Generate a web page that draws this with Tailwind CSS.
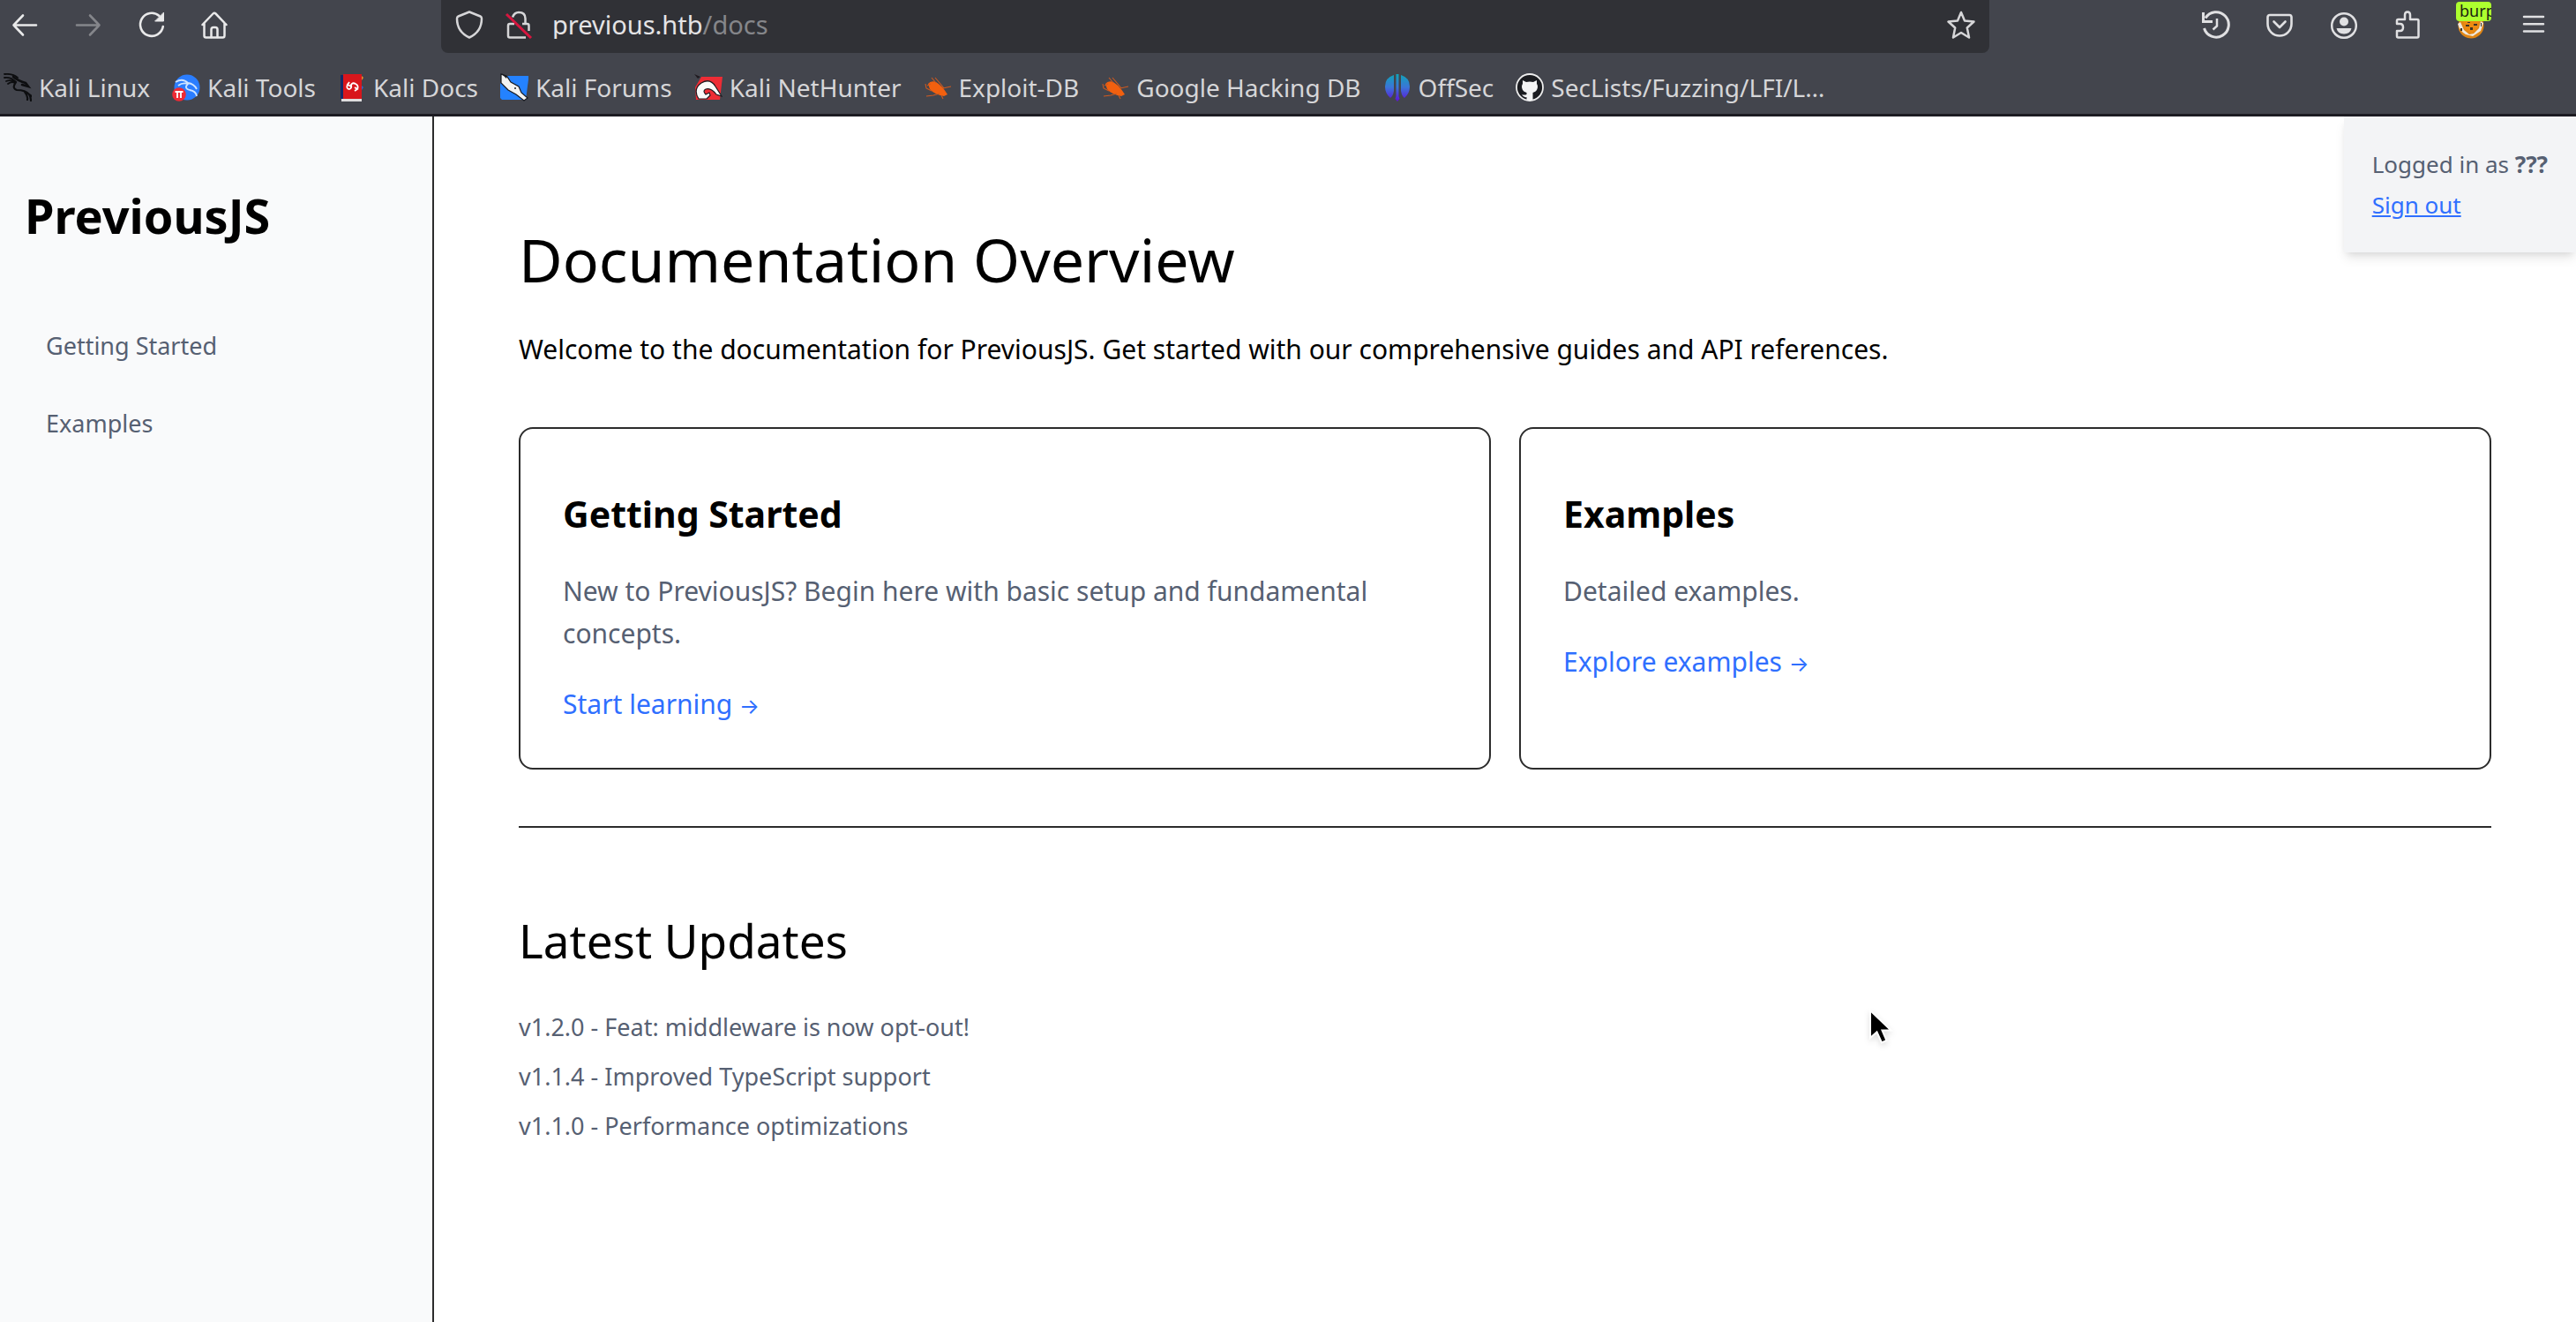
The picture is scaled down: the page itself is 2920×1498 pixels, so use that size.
<!DOCTYPE html>
<html lang="en">
<head>
    <meta charset="UTF-8">
    <meta name="viewport" content="width=device-width, initial-scale=1.0">
    <title>PreviousJS - Documentation</title>
    <!-- Tailwind CSS CDN -->
    <script src="https://cdn.jsdelivr.net/npm/@tailwindcss/browser@4"></script>
</head>
<body class="flex flex-col min-h-screen bg-white text-black font-['Noto_Sans',sans-serif]">
    <!-- Browser bar -->
    <header class="bg-[#43454d] border-b-3 border-[#1c1b22] text-[#d6d6d8]">
        <div class="flex h-[60px]">
            <div class="flex gap-10 w-[500px] shrink-0 pl-3 pt-3 text-[#e9e9ea]">
                <button type="button" aria-label="Back" class="size-8">
                    <svg viewBox="0 0 32 32" class="size-8" fill="none" stroke="currentColor" stroke-width="2.6" stroke-linecap="round" stroke-linejoin="round"><path d="M29 16.5H3.500M14 5.500L3.500 16.500L14 27.500"/></svg>
                </button>
                <button type="button" aria-label="Forward" class="size-8 text-[#85868b]">
                    <svg viewBox="0 0 32 32" class="size-8" fill="none" stroke="currentColor" stroke-width="2.6" stroke-linecap="round" stroke-linejoin="round"><path d="M3 16.500H28.500M18 5.500L28.500 16.500L18 27.500"/></svg>
                </button>
                <button type="button" aria-label="Reload" class="size-8">
                    <svg viewBox="0 0 32 32" class="size-8" fill="none" stroke="currentColor" stroke-width="2.6" stroke-linecap="round"><path d="M28.800 18A13 13 0 1 1 24.500 6"/><path d="M29.500 2.500V12H20Z" fill="currentColor" stroke-width="1"/></svg>
                </button>
                <button type="button" aria-label="Home" class="size-8">
                    <svg viewBox="0 0 32 32" class="size-8" fill="none" stroke="currentColor" stroke-width="2.500" stroke-linecap="round" stroke-linejoin="round"><path d="M1.500 16L13.500 3.500Q15 2 16.500 3.500L28.500 16M3.500 14V28.500Q3.500 30.500 5.500 30.500H24.500Q26.500 30.500 26.500 28.500V14"/><path d="M11.500 30V21.500Q11.500 19 14 19H16Q18.500 19 18.500 21.500V30"/></svg>
                </button>
            </div>
            <div class="flex flex-1 min-w-0 bg-[#303136] rounded-b-lg px-4 pt-3">
                <svg viewBox="0 0 32 32" class="size-8 shrink-0" fill="none" stroke="currentColor" stroke-width="2.500" stroke-linejoin="round"><path d="M16 1.500L28.500 6.500Q30 7.200 30 9Q30 24 16 30.500Q2 24 2 9Q2 7.200 3.500 6.500Z"/></svg>
                <svg viewBox="0 0 32 32" class="size-8 shrink-0 ml-6" fill="none" stroke="currentColor" stroke-width="2.500" stroke-linejoin="round"><path d="M9 7.500Q11 2 16 2Q23.500 2 23.500 9V14.500M27.500 23V17Q27.500 15 25.500 15H20M11 15H6Q4 15 4 17V28.500Q4 30.500 6 30.500H24"/><path d="M2 4L30 31" stroke="#d7163f" stroke-width="3"/></svg>
                <label class="flex h-8 items-center ml-[22px] text-[29px] leading-8">
                    <input type="text" aria-label="Address" value="previous.htb" class="field-sizing-content text-[#e4e4e6] outline-none">
                    <span class="text-[#85868a]">/docs</span>
                </label>
                <button type="button" aria-label="Bookmark this page" class="size-8 ml-auto">
                    <svg viewBox="0 0 32 32" class="size-8" fill="none" stroke="currentColor" stroke-width="2.500" stroke-linejoin="round"><path d="M16 2L20 11.500L30.500 12.500L22.800 19.500L25 30.500L16 25L7 30.500L9.200 19.500L1.500 12.500L12 11.500Z"/></svg>
                </button>
            </div>
            <div class="flex justify-end gap-10 w-[665px] shrink-0 pr-8 pt-3 text-[#e0e0e2]">
                <button type="button" aria-label="History" class="size-8">
                    <svg viewBox="0 0 32 32" class="size-8" fill="none" stroke="currentColor" stroke-width="3"><path d="M4 8.500A14.200 14.200 0 1 1 2.500 20M1.500 2V12.500H12"/><path d="M17 9V17.500L12.500 21.500" stroke-width="2.500"/></svg>
                </button>
                <button type="button" aria-label="Save to Pocket" class="size-8">
                    <svg viewBox="0 0 32 32" class="size-8" fill="none" stroke="currentColor" stroke-width="2.600" stroke-linecap="round" stroke-linejoin="round"><path d="M5 5H27Q29.500 5 29.500 7.500V15A13.500 13.500 0 0 1 2.500 15V7.500Q2.500 5 5 5Z"/><path d="M9.500 12.500L16 19L22.500 12.500"/></svg>
                </button>
                <button type="button" aria-label="Account" class="size-8">
                    <svg viewBox="0 0 32 32" class="size-8" fill="none" stroke="currentColor" stroke-width="2.500"><circle cx="17" cy="17" r="13.800"/><circle cx="17" cy="12.500" r="5" fill="currentColor" stroke="none"/><path d="M8.500 20H25.500Q24 26.500 17 26.500T8.500 20Z" fill="currentColor" stroke="none"/></svg>
                </button>
                <button type="button" aria-label="Extensions" class="size-8">
                    <svg viewBox="0 0 32 32" class="size-8" fill="none" stroke="currentColor" stroke-width="2.500" stroke-linejoin="round"><path d="M5 15V11.500Q5 10 6.500 10H14V5Q14 1.500 17 1.500T20 5V10H28Q29.500 10 29.500 11.500V29Q29.500 30.500 28 30.500H6.500Q5 30.500 5 29V23H8.500Q12 23 12 19T8.500 15H5Z"/></svg>
                </button>
                <button type="button" aria-label="FoxyProxy" class="relative size-8">
                    <svg viewBox="0 0 32 32" class="size-8"><circle cx="17" cy="17" r="14.500" fill="#e08514"/><path d="M2 15L5 13L9 22L15 27L20 26L26 20L28 12L31 14L28 23L19 29L11 27Q4 23 2 15Z" fill="#efe9df"/><path d="M8 12H26L25 19L18 26L10 21Z" fill="#ec8a12"/><path d="M11 16h4v2h-4zM20 15h4v2h-4zM16 19h3v3h-3zM5 20h2v3h-2zM28 14h1v4h-1zM13 13h3v1h-3z" fill="#3c3326"/></svg>
                    <span class="absolute left-0 -top-2.5 w-10 h-[22px] overflow-hidden rounded-sm bg-[#adff2f] pl-1 text-left text-[18px] leading-5 text-[#1c2410]">burp</span>
                </button>
                <button type="button" aria-label="Menu" class="size-8">
                    <svg viewBox="0 0 32 32" class="size-8" stroke="currentColor" stroke-width="2.500" stroke-linecap="round"><path d="M5 7H27M5 15.200H27M5 23.500H27"/></svg>
                </button>
            </div>
        </div>

        <!-- Bookmarks -->
        <nav aria-label="Bookmarks" class="flex items-center gap-[25px] h-[69px] pt-2 pl-1 text-[28px] leading-10 whitespace-nowrap">
            <a href="#" class="flex items-center gap-2">
                <svg viewBox="0 0 32 32" class="size-8" fill="none" stroke="#0d0e10" stroke-linecap="round"><path d="M1 1Q10 0 16 5M1 5Q8 4 13 9M3 9Q8 7 13 10M5 12Q9 9 13 11" stroke-width="1.800"/><path d="M11 4Q17 9 25 11L28 15L21 13" stroke-width="2.600"/><path d="M14 10Q9 17 15 19Q25 19 29 24Q31 27 31 31M24 21Q28 26 27 30M29 24L32 26" stroke-width="2.200"/></svg>
                Kali Linux
            </a>
            <a href="#" class="flex items-center gap-2">
                <svg viewBox="0 0 32 32" class="size-8"><circle cx="17" cy="16" r="14.500" fill="#2a7dff"/><path d="M4 10Q12 5 18 11Q25 12 28 18M7 14Q12 10 18 12Q13 17 20 19Q27 20 28 26" fill="none" stroke="#cfe4ff" stroke-width="1.800"/><circle cx="8" cy="24" r="7.800" fill="#ee2a35"/><path d="M3.500 21H12.500M6 21V28M10 21V28" stroke="#fff" stroke-width="1.800"/></svg>
                Kali Tools
            </a>
            <a href="#" class="flex items-center gap-2">
                <svg viewBox="0 0 32 32" class="size-8"><path d="M3 2H7V29H3Z" fill="#142a66"/><path d="M6 1H27V29H6Z" fill="#d8161c"/><path d="M4 29H27V32H4Z" fill="#dedede"/><path d="M27 3L29 5L27 8Z" fill="#e8902a"/><path d="M27 14L29 16L27 19Z" fill="#3566c8"/><path d="M11 12Q9 18 13 18Q16 17 15 13Q17 10 20 12Q24 14 22 18M13 10L11 13L15 15M19 20L22 18L19 16" fill="none" stroke="#fff" stroke-width="1.800"/></svg>
                Kali Docs
            </a>
            <a href="#" class="flex items-center gap-2">
                <svg viewBox="0 0 32 32" class="size-8"><path d="M6 3H32V7L29 30H2L0 28V12Z" fill="#2482ff"/><path d="M1 1L8 4L12 10L21 15L24 22L31 28L27 31L18 24L9 19L1 11Z" fill="#f4f4f2" stroke="#191b20" stroke-width="1.200"/><path d="M1 0L8 3L7 6Z" fill="#191b20"/><circle cx="17" cy="17" r="1" fill="#191b20"/></svg>
                Kali Forums
            </a>
            <a href="#" class="flex items-center gap-2">
                <svg viewBox="0 0 32 32" class="size-8"><path d="M8 4H32L29 30H2L1 16Z" fill="#ee2c35"/><path d="M5 29Q-2 18 8 11Q18 5 24 15L31 26L25 24Q19 16 13 18Q9 20 13 24L17 22L18 25L14 29Z" fill="#fafafa" stroke="#201a20" stroke-width="1.200"/><path d="M0 1L7 4L4 6Z" fill="#201a20"/></svg>
                Kali NetHunter
            </a>
            <a href="#" class="flex items-center gap-2">
                <svg viewBox="0 0 32 32" class="size-8"><path d="M5 12Q8 8 14 10Q21 14 27 24L23 26Q12 24 7 18Z" fill="#f2600f"/><path d="M2 12L3 17L9 20M9 5L14 11M13 5L19 12L23 17M22 17L31 15M3 26L11 25L18 23M20 25L22 29M4 14L8 12" fill="none" stroke="#cf5a20" stroke-width="1.100"/></svg>
                Exploit-DB
            </a>
            <a href="#" class="flex items-center gap-2">
                <svg viewBox="0 0 32 32" class="size-8"><path d="M5 12Q8 8 14 10Q21 14 27 24L23 26Q12 24 7 18Z" fill="#f2600f"/><path d="M2 12L3 17L9 20M9 5L14 11M13 5L19 12L23 17M22 17L31 15M3 26L11 25L18 23M20 25L22 29M4 14L8 12" fill="none" stroke="#cf5a20" stroke-width="1.100"/></svg>
                Google Hacking DB
            </a>
            <a href="#" class="flex items-center gap-2">
                <svg viewBox="0 0 32 32" class="size-8"><defs><linearGradient id="offsec" gradientUnits="userSpaceOnUse" x1="0" y1="1" x2="0" y2="31"><stop offset="0" stop-color="#10a5b8"/><stop offset="0.500" stop-color="#3b74d8"/><stop offset="1" stop-color="#5c16d8"/></linearGradient></defs><path d="M12 2V20Q11 26 8 28Q2 23 2 15Q2 5 12 2ZM20 2V20Q21 26 24 28Q30 23 30 15Q30 5 20 2ZM14.500 1H17.500V26L18.500 29L16 32L13.500 29L14.500 26Z" fill="url(#offsec)"/></svg>
                OffSec
            </a>
            <a href="#" class="flex items-center gap-2">
                <svg viewBox="0 0 32 32" class="size-8"><circle cx="16" cy="16" r="15" fill="#1b1c20" stroke="#ececec" stroke-width="1.800"/><path d="M8 8L12 10Q16 9 20 10L24 8V12Q26 15 24 19Q23 21 19.500 22V30.500Q16 31.500 12.500 30.500V27Q9 28 7 24Q10 25 12.500 24V22Q9 21 8 19Q6 15 8 12Z" fill="#f4f4f4"/></svg>
                SecLists/Fuzzing/LFI/L…
            </a>
        </nav>
    </header>

    <!-- Page -->
    <div class="relative flex flex-1">
        <aside class="w-[492px] shrink-0 bg-gray-50 border-r-2 border-[#2c2c2c] px-7 pt-[76px]">
            <h2 class="text-[54px] leading-[72px] font-bold">PreviousJS</h2>
            <nav aria-label="Documentation" class="flex flex-col gap-4 mt-[76px] text-[27px] leading-10 text-[#566072]">
                <a href="#" class="px-6 py-4">Getting Started</a>
                <a href="#" class="px-6 py-4">Examples</a>
            </nav>
        </aside>

        <main class="flex-1 min-w-0 px-24 pt-[122px] pb-24">
            <h1 class="text-[68px] leading-20">Documentation Overview</h1>
            <p class="mt-[38px] text-[30px] leading-12">Welcome to the documentation for PreviousJS. Get started with our comprehensive guides and API references.</p>

            <div class="grid grid-cols-2 gap-8 mt-16">
                <section class="border-2 border-[#2c2c2c] rounded-2xl p-12 text-[30px] leading-12">
                    <h2 class="mt-5 text-[41px] leading-14 font-bold">Getting Started</h2>
                    <p class="mt-9 text-[#566072]">New to PreviousJS? Begin here with basic setup and fundamental concepts.</p>
                    <a href="#" class="block mt-8 text-[#2f6fff]">Start learning <span class="font-[Inter] text-[24px] leading-none">→</span></a>
                </section>
                <section class="border-2 border-[#2c2c2c] rounded-2xl p-12 text-[30px] leading-12">
                    <h2 class="mt-5 text-[41px] leading-14 font-bold">Examples</h2>
                    <p class="mt-9 text-[#566072]">Detailed examples.</p>
                    <a href="#" class="block mt-8 text-[#2f6fff]">Explore examples <span class="font-[Inter] text-[24px] leading-none">→</span></a>
                </section>
            </div>

            <section class="mt-16 border-t-2 border-[#2c2c2c] pt-24">
                <h2 class="text-[53px] leading-16">Latest Updates</h2>
                <ul class="flex flex-col gap-4 mt-[46px] text-[27px] leading-10 text-[#566072]">
                    <li>v1.2.0 - Feat: middleware is now opt-out!</li>
                    <li>v1.1.4 - Improved TypeScript support</li>
                    <li>v1.1.0 - Performance optimizations</li>
                </ul>
            </section>
        </main>

        <!-- Session info -->
        <div class="absolute top-0 right-0 bg-gray-100 px-8 pt-[34px] pb-[34px] text-[26px] leading-10 text-[#566072] shadow-[0_8px_12px_-2px_rgba(0,0,0,0.1),0_4px_8px_-4px_rgba(0,0,0,0.1)]">
            <p>Logged in as <b>???</b></p>
            <a href="#" class="block mt-1.5 text-[#2f6fff] underline">Sign out</a>
        </div>

        <!-- Mouse pointer -->
        <svg viewBox="0 0 28 44" class="absolute left-[2118px] top-[1010px] w-7 h-11 drop-shadow-md pointer-events-none"><path d="M2 3V34L9.500 27.500L15 39.500L20.500 37L15.500 25.500H25.500Z" fill="#000" stroke="#fff" stroke-width="2"/></svg>
    </div>
</body>
</html>
